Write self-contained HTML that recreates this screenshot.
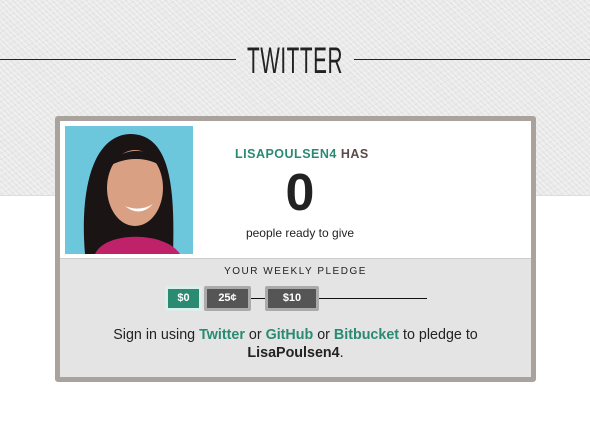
<!DOCTYPE html>
<html><head><meta charset="utf-8"><style>
*{margin:0;padding:0;box-sizing:border-box}
body{width:590px;height:439px;position:relative;background:#fff;font-family:"Liberation Sans",sans-serif;overflow:hidden}
.bg{position:absolute;left:0;top:0;width:590px;height:196px;background:#e9e9e9;
background-image:repeating-linear-gradient(45deg,rgba(255,255,255,.5) 0 1px,transparent 1px 4px),repeating-linear-gradient(-30deg,rgba(200,200,200,.25) 0 1px,transparent 1px 5px);border-bottom:1px solid #ddd}
.line{position:absolute;top:59px;height:1px;background:#222}
.title{position:absolute;left:195px;width:200px;top:41px;text-align:center;font-size:37px;line-height:40px;color:#222;transform:scaleX(.56);transform-origin:center;letter-spacing:1px}
.card{position:absolute;left:55px;top:116px;width:481px;height:266px;border:5px solid #aaa29d;border-radius:3px;background:#e4e4e4}
.top{position:absolute;left:0;top:0;width:471px;height:138px;background:#fff;border-bottom:1px solid #ccc}
.photo{position:absolute;left:5px;top:5px;width:128px;height:128px;background:#6cc6dc;overflow:hidden}
.h{position:absolute;left:175px;top:26px;font-size:12.5px;font-weight:bold;letter-spacing:.5px;color:#2a8a72}
.n{position:absolute;left:160px;width:160px;top:44px;text-align:center;font-size:52px;font-weight:bold;color:#222;line-height:56px}
.p{position:absolute;left:160px;width:160px;top:105px;text-align:center;font-size:12px;color:#222}
.wk{position:absolute;left:0;width:471px;top:145px;text-align:center;font-size:10px;letter-spacing:1.5px;color:#222}
.b{position:absolute;top:165px;height:25px;color:#fff;font-size:11px;font-weight:bold;text-align:center;line-height:19px;border:3px solid #aaa;background:#555;border-radius:2px}
.s{position:absolute;left:0;width:471px;top:205px;text-align:center;font-size:14.3px;line-height:18px;color:#222}
.s b{color:#2a8a72}
</style></head><body>
<div class="bg"></div>
<div class="line" style="left:0;width:236px"></div>
<div class="line" style="left:354px;width:236px"></div>
<div class="title">TWITTER</div>
<div class="card">
<div class="top">
<div class="photo"><svg width="128" height="128"><path d="M20 128 C15 70 25 10 65 8 C105 8 110 60 108 128Z" fill="#1a1414"/><ellipse cx="70" cy="62" rx="28" ry="38" fill="#d9a083"/><path d="M45 40 C55 20 90 18 100 45 C90 30 60 30 45 40Z" fill="#1a1414"/><path d="M60 80 Q75 92 88 78 Q75 86 60 80Z" fill="#fff"/><path d="M30 128 C40 105 100 105 115 128Z" fill="#c0226a"/></svg></div>
<div class="h">LISAPOULSEN4 <span style="color:#5a4a48">HAS</span></div>
<div class="n">0</div>
<div class="p">people ready to give</div>
</div>
<div class="wk">YOUR WEEKLY PLEDGE</div>
<div style="position:absolute;left:190px;top:177px;width:177px;height:1px;background:#111"></div>
<div class="b" style="left:105px;width:37px;background:#2a8a72;border-color:#dcefea">$0</div>
<div class="b" style="left:144px;width:47px">25¢</div>
<div class="b" style="left:205px;width:54px">$10</div>
<div class="s">Sign in using <b>Twitter</b> or <b>GitHub</b> or <b>Bitbucket</b> to pledge to<br><strong>LisaPoulsen4</strong>.</div>
</div>
</body></html>
